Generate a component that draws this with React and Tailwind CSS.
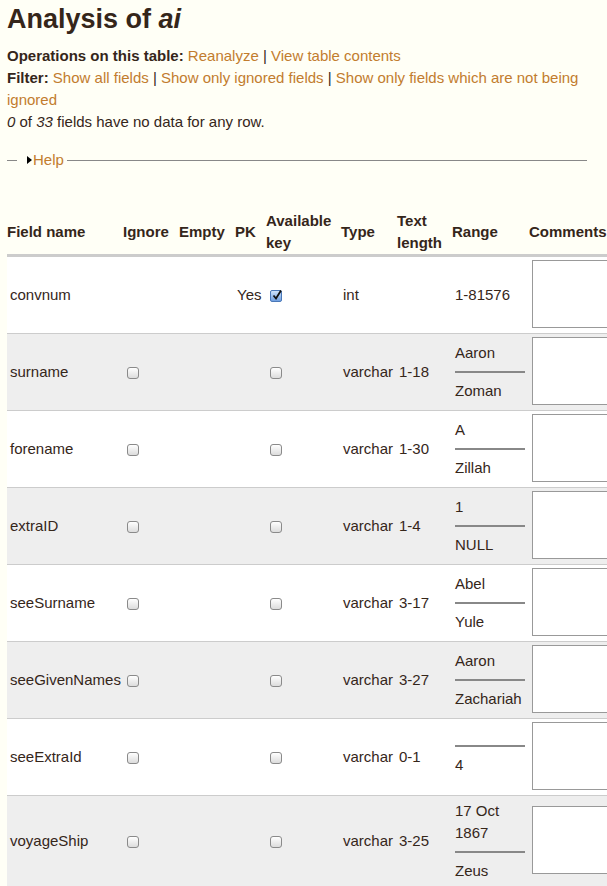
import React from "react";

const rows = [
  { name: "convnum", pk: true, type: "int", len: "", range: ["1-81576"], single: true },
  { name: "surname", type: "varchar", len: "1-18", range: ["Aaron"], max: "Zoman" },
  { name: "forename", type: "varchar", len: "1-30", range: ["A"], max: "Zillah" },
  { name: "extraID", type: "varchar", len: "1-4", range: ["1"], max: "NULL" },
  { name: "seeSurname", type: "varchar", len: "3-17", range: ["Abel"], max: "Yule" },
  { name: "seeGivenNames", type: "varchar", len: "3-27", range: ["Aaron"], max: "Zachariah" },
  { name: "seeExtraId", type: "varchar", len: "0-1", range: [], max: "4" },
  { name: "voyageShip", type: "varchar", len: "3-25", range: ["17 Oct", "1867"], max: "Zeus" },
];

function Box({ checked }) {
  if (checked) {
    return (
      <span className="inline-block align-middle w-[12px] h-[12px] rounded-[2px] border border-[#4a78b8] bg-gradient-to-b from-[#cfe3fb] to-[#6f9fe0] relative">
        <svg viewBox="0 0 12 12" className="absolute left-[0px] top-[-2px] w-[12px] h-[12px]">
          <path d="M2.5 6.5 L5 9.5 L10 1.5" fill="none" stroke="#111" strokeWidth="1.8" />
        </svg>
      </span>
    );
  }
  return (
    <span className="inline-block align-middle w-[12px] h-[12px] rounded-[3px] border border-[#8a8a8a] bg-gradient-to-b from-[#ffffff] to-[#dcdcdc]" />
  );
}

export default function App() {
  return (
    <div
      className="w-[607px] min-h-[886px] overflow-hidden bg-[#fffff6] text-[#35261a] text-[15px]"
      style={{ fontFamily: '"Liberation Sans", Arial, sans-serif' }}
    >
      <div className="pl-[7px] pt-[3px]">
        <h1 className="text-[27px] leading-[32px] font-bold">
          Analysis of <i>ai</i>
        </h1>

        <div className="mt-[10px] leading-[22px] pr-[10px]">
          <p>
            <b>Operations on this table:</b>{" "}
            <span className="text-[#c27c2e]">Reanalyze</span>
            {" | "}
            <span className="text-[#c27c2e]">View table contents</span>
          </p>
          <p>
            <b>Filter:</b> <span className="text-[#c27c2e]">Show all fields</span>
            {" | "}
            <span className="text-[#c27c2e]">Show only ignored fields</span>
            {" | "}
            <span className="text-[#c27c2e]">Show only fields which are not being ignored</span>
          </p>
          <p>
            <i>0</i> of <i>33</i> fields have no data for any row.
          </p>
        </div>

        {/* HELP */}
        <div className="mt-[16px] flex items-center w-[580px] h-[22px]">
          <span className="w-[10px] h-px bg-[#888]" />
          <span className="ml-[10px] w-0 h-0 border-y-[4px] border-y-transparent border-l-[5px] border-l-black" />
          <span className="ml-[1px] text-[#c27c2e]">Help</span>
          <span className="ml-[3px] flex-1 h-px bg-[#888]" />
        </div>

        {/* TABLE */}
        <table className="mt-[39px] table-fixed border-collapse w-[640px]">
          <colgroup>
            <col className="w-[114px]" />
            <col className="w-[56px]" />
            <col className="w-[56px]" />
            <col className="w-[31px]" />
            <col className="w-[75px]" />
            <col className="w-[56px]" />
            <col className="w-[55px]" />
            <col className="w-[77px]" />
            <col className="w-[120px]" />
          </colgroup>
          <thead>
            <tr className="border-b-[3px] border-[#cccccc] text-left leading-[22px] align-middle">
              <th className="font-bold pl-0">Field name</th>
              <th className="font-bold pl-[2px]">Ignore</th>
              <th className="font-bold pl-[2px]">Empty</th>
              <th className="font-bold pl-[2px]">PK</th>
              <th className="font-bold pl-[2px]">
                Available
                <br />
                key
              </th>
              <th className="font-bold pl-[2px]">Type</th>
              <th className="font-bold pl-[2px]">
                Text
                <br />
                length
              </th>
              <th className="font-bold pl-[2px]">Range</th>
              <th className="font-bold pl-[2px] whitespace-nowrap">Comments</th>
            </tr>
          </thead>
          <tbody>
            {rows.map((r, i) => (
              <tr
                key={r.name}
                className={`border-b border-[#cccccc] align-middle ${i % 2 ? "bg-[#eeeeee]" : "bg-white"}`}
              >
                <td className="pl-[3px] whitespace-nowrap">{r.name}</td>
                <td className="pl-[6px]">{r.pk ? null : <Box />}</td>
                <td />
                <td className="pl-[4px]">{r.pk ? "Yes" : null}</td>
                <td className="pl-[6px]">
                  <Box checked={r.pk} />
                </td>
                <td className="pl-[4px]">{r.type}</td>
                <td className="pl-[4px]">{r.len}</td>
                <td className="pl-[5px] pr-[2px] py-[4px] leading-[22px]">
                  {r.range.map((t) => (
                    <div key={t}>{t}</div>
                  ))}
                  {!r.single && (
                    <>
                      <div className="my-[7px] h-[2px] bg-[#888]" />
                      <div>{r.max}</div>
                    </>
                  )}
                </td>
                <td className="pl-[5px] pt-[3px] pb-[5px]">
                  <textarea className="block w-[110px] h-[68px] bg-white border border-[#999] resize-none" />
                </td>
              </tr>
            ))}
          </tbody>
        </table>
      </div>
    </div>
  );
}
